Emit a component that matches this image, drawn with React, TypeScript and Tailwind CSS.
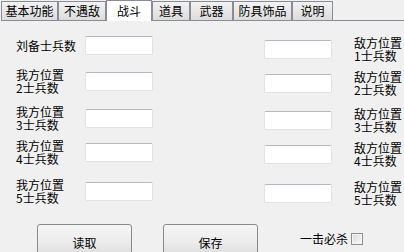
const tabs = [
  { label: "基本功能", w: "w-[57px]" },
  { label: "不遇敌", w: "w-[48px]" },
  { label: "战斗", w: "w-[46px]", active: true },
  { label: "道具", w: "w-[38px]" },
  { label: "武器", w: "w-[43px]" },
  { label: "防具饰品", w: "w-[59px]" },
  { label: "说明", w: "w-[41px]" },
];

const rows = [
  { left: "刘备士兵数", right: "敌方位置\n1士兵数", mt: "mt-[10px]", rOff: "mt-[4px]" },
  { left: "我方位置\n2士兵数", right: "敌方位置\n2士兵数", mt: "mt-[8px]", rOff: "mt-[2px]" },
  { left: "我方位置\n3士兵数", right: "敌方位置\n3士兵数", mt: "mt-[9px]", rOff: "mt-[2px]" },
  { left: "我方位置\n4士兵数", right: "敌方位置\n4士兵数", mt: "mt-[6px]", rOff: "mt-[2px]" },
  { left: "我方位置\n5士兵数", right: "敌方位置\n5士兵数", mt: "mt-[11px]", rOff: "mt-[2px]" },
];

function Field() {
  return (
    <div className="w-[68px] h-[19px] bg-white border border-[#dfe3e8] border-t-[#b5b9bf] rounded-[2px]" />
  );
}

function Label({ text }: { text: string }) {
  return <p className="whitespace-pre-line text-[12px] leading-[13px] text-black">{text}</p>;
}

function Button({ children }: { children: string }) {
  return (
    <button className="h-[36px] w-[95px] border border-[#8a8a8a] rounded-[3px] bg-gradient-to-b from-[#f6f6f6] via-[#ececec] to-[#d9d9d9] text-[12px] text-black flex items-center justify-center pt-[2px]">
      {children}
    </button>
  );
}

export default function App() {
  return (
    <div className="w-[404px] h-[252px] overflow-hidden bg-[#f0f0f0] font-['Noto_Sans_CJK_SC','Noto_Sans',sans-serif] text-black">
      <div className="flex h-[21px] pl-[1px]">
        {tabs.map((t) =>
          t.active ? (
            <div
              key={t.label}
              className={`${t.w} h-[21px] bg-white border border-b-0 border-[#898c95] text-[12px] leading-none flex justify-center pt-[4px]`}
            >
              {t.label}
            </div>
          ) : (
            <div
              key={t.label}
              className={`${t.w} h-[21px] border-b border-b-[#898c95] pt-[1px]`}
            >
              <div className="h-[19px] bg-gradient-to-b from-[#f2f2f2] to-[#dcdcdc] border border-b-0 border-[#898c95] text-[12px] leading-none flex justify-center items-center">
                {t.label}
              </div>
            </div>
          )
        )}
        <div className="flex-1 border-b border-b-[#898c95]" />
      </div>

      {rows.map((r, i) => (
        <div key={i} className={`flex items-start h-[28px] ${r.mt}`}>
          <div className="w-[85px] h-full pl-[16px] flex items-center">
            <Label text={r.left} />
          </div>
          <div className="h-full flex items-center">
            <Field />
          </div>
          <div className={`ml-[111px] h-full flex items-center ${r.rOff}`}>
            <Field />
          </div>
          <div className={`ml-[22px] h-full flex items-center ${r.rOff}`}>
            <Label text={r.right} />
          </div>
        </div>
      ))}

      <div className="flex items-start mt-[19px] pl-[37px]">
        <Button>读取</Button>
        <div className="ml-[31px]">
          <Button>保存</Button>
        </div>
        <div className="ml-[42px] mt-[8px] flex items-center gap-[3px] text-[12px] leading-[14px]">
          <span>一击必杀</span>
          <span className="w-[12px] h-[12px] border border-[#8f8f8f] bg-[#f4f4f4] flex items-center justify-center">
            <span className="w-[8px] h-[8px] bg-gradient-to-br from-[#dcdcdc] to-[#f8f8f8]" />
          </span>
        </div>
      </div>
    </div>
  );
}
